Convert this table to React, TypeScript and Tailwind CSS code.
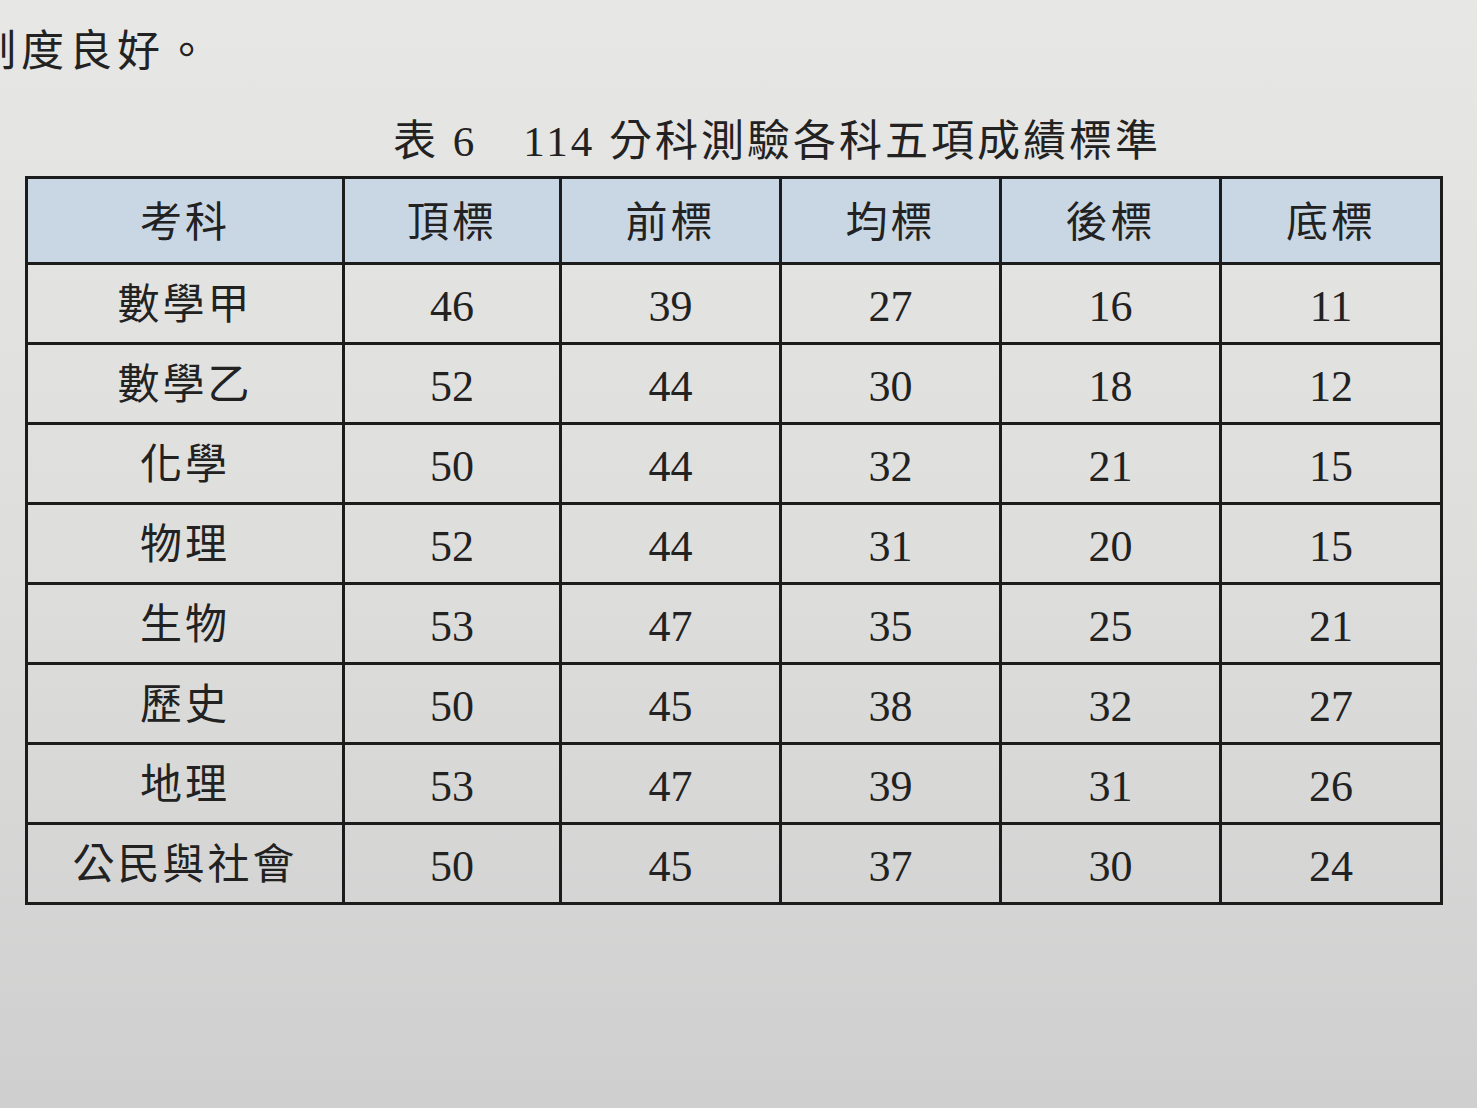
import React from "react";

interface ScoreRow {
    subject: string,
    scores: number[]
}

const headers = ["頂標", "前標", "均標", "後標", "底標"];

const rows: ScoreRow[] = [
    { subject: "數學甲", scores: [46, 39, 27, 16, 11] },
    { subject: "數學乙", scores: [52, 44, 30, 18, 12] },
    { subject: "化學", scores: [50, 44, 32, 21, 15] },
    { subject: "物理", scores: [52, 44, 31, 20, 15] },
    { subject: "生物", scores: [53, 47, 35, 25, 21] },
    { subject: "歷史", scores: [50, 45, 38, 32, 27] },
    { subject: "地理", scores: [53, 47, 39, 31, 26] },
    { subject: "公民與社會", scores: [50, 45, 37, 30, 24] },
];

const colWidths = ["w-[317px]", "w-[217px]", "w-[220px]", "w-[220px]", "w-[220px]", "w-[221px]"];

const cell = "border-[3px] border-[#1c1c1c] text-center align-middle p-0";

/** 分科測驗成績標準表 */
export default function App() {
    return (
        <div
            className="w-full h-[1108px] overflow-hidden bg-gradient-to-b from-[#e7e7e5] via-[#dededd] to-[#cfcfcf] text-[#222]"
            style={{ fontFamily: '"Liberation Serif", "Noto Sans CJK TC", serif' }}
        >
            <p className="mt-[28px] ml-[-27px] text-[43px] leading-[48px] tracking-[5px] whitespace-nowrap">
                制度良好。
            </p>
            <h1 className="mt-[42px] pl-[393px] text-[43px] leading-[48px] tracking-[3px] whitespace-nowrap">
                表 6<span className="inline-block w-[46px]" />114 分科測驗各科五項成績標準
            </h1>
            <table className="mt-[10px] ml-[25px] border-collapse border-[3px] border-[#1c1c1c] table-fixed">
                <colgroup>
                    {colWidths.map((w, i) => <col key={i} className={w} />)}
                </colgroup>
                <thead>
                    <tr className="h-[86px] bg-[#c9d7e5]">
                        <th className={`${cell} font-normal text-[42px] tracking-[3px] pt-[6px]`}>考科</th>
                        {headers.map((h) => (
                            <th key={h} className={`${cell} font-normal text-[42px] tracking-[3px] pt-[6px]`}>{h}</th>
                        ))}
                    </tr>
                </thead>
                <tbody>
                    {rows.map((row) => (
                        <tr key={row.subject} className="h-[80px]">
                            <td className={`${cell} text-[42px] tracking-[3px] pt-[4px]`}>{row.subject}</td>
                            {row.scores.map((s, i) => (
                                <td key={i} className={`${cell} text-[44px] pt-[6px]`}>{s}</td>
                            ))}
                        </tr>
                    ))}
                </tbody>
            </table>
        </div>
    );
}
